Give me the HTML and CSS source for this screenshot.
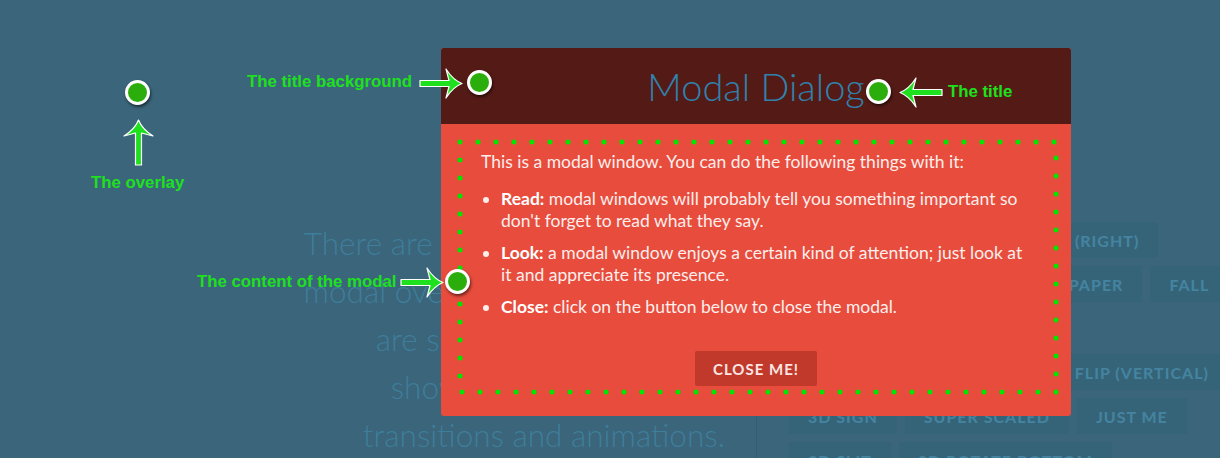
FILE: index.html
```html
<!DOCTYPE html>
<html lang="en">
<head>
  <meta charset="UTF-8" />
  <title>Modal Window Effects</title>
  <link rel="stylesheet" href="styles.css">
</head>
<body>
  <div class="main">
    <div class="column column-text">
      <p>There are many possibilities for modal overlays to appear. Here are some modern ways of showing them using CSS transitions and animations.</p>
    </div>
    <div class="column column-buttons">
      <div class="btn-row">
        <button class="md-trigger">Fade in &amp; Scale</button>
        <button class="md-trigger">Slide in (right)</button>
      </div>
      <div class="btn-row">
        <button class="md-trigger">Slide in (bottom)</button>
        <button class="md-trigger">Newspaper</button>
        <button class="md-trigger">Fall</button>
      </div>
      <div class="btn-row">
        <button class="md-trigger">Side Fall</button>
        <button class="md-trigger">Sticky Up</button>
      </div>
      <div class="btn-row">
        <button class="md-trigger">3D Flip (horizontal)</button>
        <button class="md-trigger">3D Flip (vertical)</button>
      </div>
      <div class="btn-row">
        <button class="md-trigger">3D Sign</button>
        <button class="md-trigger">Super Scaled</button>
        <button class="md-trigger">Just Me</button>
      </div>
      <div class="btn-row">
        <button class="md-trigger">3D Slit</button>
        <button class="md-trigger">3D Rotate Bottom</button>
      </div>
    </div>
  </div>

  <!-- the modal -->
  <div class="md-modal">
    <h3>Modal Dialog</h3>
    <div class="md-body">
      <p>This is a modal window. You can do the following things with it:</p>
      <ul>
        <li><strong>Read:</strong> modal windows will probably tell you something important so don't forget to read what they say.</li>
        <li><strong>Look:</strong> a modal window enjoys a certain kind of attention; just look at it and appreciate its presence.</li>
        <li><strong>Close:</strong> click on the button below to close the modal.</li>
      </ul>
      <button class="md-close">Close me!</button>
    </div>
  </div>

  <!-- annotations -->
  <div class="notes">
    <svg class="dotted" width="1220" height="458">
      <rect x="460" y="142" width="596" height="250" fill="none" stroke="#00e600" stroke-width="5" stroke-linecap="round" stroke-dasharray="0 18" />
    </svg>

    <span class="dot dot-overlay"></span>
    <svg class="arrow arrow-up" width="31" height="47" viewBox="0 0 31 47">
      <path d="M15.5 1 Q19 10 30 17 L18.5 14 L18.5 46 L12.5 46 L12.5 14 L1 17 Q12 10 15.5 1 Z" />
    </svg>
    <span class="label label-overlay">The overlay</span>

    <span class="label label-titlebg">The title background</span>
    <svg class="arrow arrow-titlebg" width="44" height="31" viewBox="0 0 44 31">
      <path d="M43 15.5 Q34 19 27 30 L30 18.5 L1 18.5 L1 12.5 L30 12.5 L27 1 Q34 12 43 15.5 Z" />
    </svg>
    <span class="dot dot-titlebg"></span>

    <span class="dot dot-title"></span>
    <svg class="arrow arrow-title" width="44" height="31" viewBox="0 0 44 31">
      <path d="M1 15.5 Q10 19 17 30 L14 18.5 L43 18.5 L43 12.5 L14 12.5 L17 1 Q10 12 1 15.5 Z" />
    </svg>
    <span class="label label-title">The title</span>

    <span class="label label-content">The content of the modal</span>
    <svg class="arrow arrow-content" width="44" height="31" viewBox="0 0 44 31">
      <path d="M43 15.5 Q34 19 27 30 L30 18.5 L1 18.5 L1 12.5 L30 12.5 L27 1 Q34 12 43 15.5 Z" />
    </svg>
    <span class="dot dot-content"></span>
  </div>
</body>
</html>
```

FILE: styles.css
```css
body {
  margin: 0;
  width: 1220px;
  height: 458px;
  overflow: hidden;
  position: relative;
  background-color: #3b657a;
  font-family: 'Lato', 'Liberation Sans', sans-serif;
  color: #fff;
}

.main {
  display: flex;
  margin-left: 253px;
  padding-top: 219px;
}
.column {
  padding: 0 32px;
  box-sizing: border-box;
}
.column-text {
  width: 504px;
  flex-shrink: 0;
}
.column-text p {
  margin: 0;
  font-size: 31.5px;
  font-weight: 300;
  line-height: 48px;
  text-align: right;
  color: #3e7e9b;
}
.column-buttons {
  flex: 1;
  min-width: 0;
  padding-top: 3px;
  box-shadow: -1px 0 0 rgba(0, 0, 0, 0.08);
}
.btn-row {
  display: flex;
  gap: 8px;
  margin-bottom: 8px;
  white-space: nowrap;
}
.md-trigger {
  flex-shrink: 0;
  height: 36px;
  padding: 0 19px;
  border: none;
  background-color: #356479;
  color: #4584a1;
  font-family: 'Lato', sans-serif;
  font-size: 16px;
  font-weight: 700;
  letter-spacing: 1px;
  text-transform: uppercase;
}

/* modal */
.md-modal {
  position: absolute;
  left: 441px;
  top: 48px;
  width: 630px;
  border-radius: 3px;
  overflow: hidden;
  background-color: #e74c3c;
}
.md-modal h3 {
  margin: 0;
  height: 76px;
  line-height: 76px;
  text-align: center;
  font-size: 38px;
  font-weight: 300;
  color: #2f82ad;
  background-color: #541a16;
}
.md-body {
  padding: 17px 40px 30px;
  font-size: 17.5px;
  line-height: 22px;
  color: #fdeeec;
}
.md-body p {
  margin: 0;
  padding: 10px 0;
}
.md-body ul {
  margin: 0 0 28px;
  padding-left: 20px;
}
.md-body li {
  padding: 5px 0;
}
.md-body strong {
  font-weight: 700;
  color: #fff;
}
.md-close {
  display: block;
  margin: 0 auto;
  height: 35px;
  padding: 0 18px;
  border: none;
  border-radius: 2px;
  background-color: #c0392b;
  color: #fbe6e3;
  font-family: 'Lato', sans-serif;
  font-size: 15px;
  font-weight: 700;
  letter-spacing: 1px;
  text-transform: uppercase;
}

/* annotation layer */
.notes {
  position: absolute;
  left: 0;
  top: 0;
  width: 1220px;
  height: 458px;
}
.dotted {
  position: absolute;
  left: 0;
  top: 0;
}
.dot {
  position: absolute;
  width: 19px;
  height: 19px;
  border: 3px solid #fff;
  border-radius: 50%;
  background-color: #2bad0c;
  box-shadow: 1px 2px 3px rgba(0, 0, 0, 0.55);
}
.dot-overlay { left: 125px; top: 80px; }
.dot-titlebg { left: 467px; top: 70px; }
.dot-title { left: 866px; top: 79px; }
.dot-content { left: 445px; top: 269px; }

.arrow {
  position: absolute;
}
.arrow path {
  fill: #1fe01f;
  stroke: #fff;
  stroke-width: 1.2;
  stroke-linejoin: round;
}
.arrow-up { left: 123px; top: 119px; }
.arrow-titlebg { left: 419px; top: 68px; }
.arrow-title { left: 899px; top: 77px; }
.arrow-content { left: 400px; top: 267px; }

.label {
  position: absolute;
  font-family: 'Liberation Sans', sans-serif;
  font-size: 16.8px;
  font-weight: 700;
  line-height: 20px;
  color: #1ee11e;
  white-space: nowrap;
}
.label-overlay { left: 91px; top: 173px; }
.label-titlebg { left: 247px; top: 72px; }
.label-title { left: 948px; top: 82px; }
.label-content { left: 197px; top: 272px; }
```
